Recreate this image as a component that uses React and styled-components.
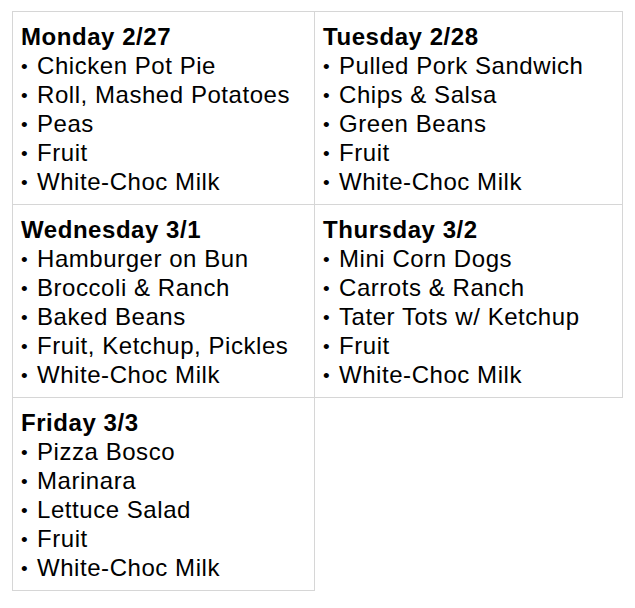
import React from "react";
import styled, { createGlobalStyle } from "styled-components";

const Global = createGlobalStyle`
  body {
    margin: 0;
    background: #fff;
    font-family: "Liberation Sans", Arial, Helvetica, sans-serif;
    color: #000;
  }
`;

const Menu = styled.table`
  border-collapse: collapse;
  margin: 11px 0 0 12px;
  table-layout: fixed;
  width: 610px;
`;

const Cell = styled.td`
  vertical-align: top;
  padding: 10px 4px 8px 8px;
  border: ${(p) => (p.$empty ? "none" : "1px solid #d6d6d6")};
  font-size: 24px;
  line-height: 29px;
  letter-spacing: 0.55px;
`;

const Day = styled.div`
  font-weight: bold;
`;

const Item = styled.div`
  white-space: nowrap;
  height: 29px;
`;

const Bullet = styled.span`
  display: inline-block;
  width: 16px;
  font-size: 19px;
  line-height: 1;
  vertical-align: 1px;
  letter-spacing: 0;
`;

const days = [
  {
    title: "Monday 2/27",
    items: ["Chicken Pot Pie", "Roll, Mashed Potatoes", "Peas", "Fruit", "White-Choc Milk"],
  },
  {
    title: "Tuesday 2/28",
    items: ["Pulled Pork Sandwich", "Chips & Salsa", "Green Beans", "Fruit", "White-Choc Milk"],
  },
  {
    title: "Wednesday 3/1",
    items: ["Hamburger on Bun", "Broccoli & Ranch", "Baked Beans", "Fruit, Ketchup, Pickles", "White-Choc Milk"],
  },
  {
    title: "Thursday 3/2",
    items: ["Mini Corn Dogs", "Carrots & Ranch", "Tater Tots w/ Ketchup", "Fruit", "White-Choc Milk"],
  },
  {
    title: "Friday 3/3",
    items: ["Pizza Bosco", "Marinara", "Lettuce Salad", "Fruit", "White-Choc Milk"],
  },
];

function DayCell({ day }) {
  if (!day) return <Cell $empty />;
  return (
    <Cell>
      <Day>{day.title}</Day>
      {day.items.map((it) => (
        <Item key={it}>
          <Bullet>•</Bullet>
          {it}
        </Item>
      ))}
    </Cell>
  );
}

export default function App() {
  const rows = [];
  for (let i = 0; i < days.length; i += 2) rows.push([days[i], days[i + 1]]);
  return (
    <>
      <Global />
      <Menu>
        <colgroup>
          <col style={{ width: 302 }} />
          <col style={{ width: 308 }} />
        </colgroup>
        <tbody>
          {rows.map((r, i) => (
            <tr key={i}>
              <DayCell day={r[0]} />
              <DayCell day={r[1]} />
            </tr>
          ))}
        </tbody>
      </Menu>
    </>
  );
}
